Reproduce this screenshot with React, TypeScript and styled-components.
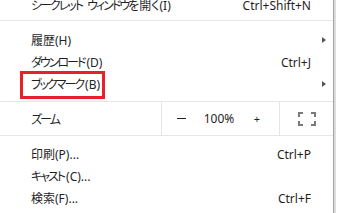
import styled, { createGlobalStyle } from "styled-components";

const GlobalStyle = createGlobalStyle`
  html, body {
    margin: 0;
    padding: 0;
    background: #fff;
    overflow: hidden;
  }
`;

const Menu = styled.div`
  width: 333px;
  height: 219px;
  margin-top: -6px;
  background: #fff;
  border-right: 1px solid #a3a3a3;
  box-shadow: 2px 0 0 #dcdcdc;
  font-family: "Noto Sans", "Noto Sans CJK JP", sans-serif;
  font-size: 12px;
  font-feature-settings: "palt";
  color: #1f1f1f;
`;

const Row = styled.div<{ $h?: number }>`
  position: relative;
  display: grid;
  grid-template-columns: 1fr auto 22px;
  align-items: center;
  height: ${(p) => p.$h ?? 22}px;
  padding-left: 31px;
`;

const Label = styled.span`
  white-space: nowrap;
`;

// kana in Yu Gothic UI are much narrower than in Noto CJK
const Kana = styled.span`
  letter-spacing: -2px;
  margin-right: 2px;
`;

const Shortcut = styled.span`
  white-space: nowrap;
  text-align: right;
`;

const Arrow = styled.span`
  width: 0;
  height: 0;
  margin-left: 11px;
  border-top: 3.5px solid transparent;
  border-bottom: 3.5px solid transparent;
  border-left: 4px solid #555;
`;

const Separator = styled.div<{ $top: number; $bottom: number }>`
  height: 1px;
  background: #e6e6e6;
  margin: ${(p) => p.$top}px 0 ${(p) => p.$bottom}px;
`;

const Highlight = styled.div`
  position: absolute;
  left: 20px;
  top: -2px;
  width: 85px;
  height: 28px;
  box-sizing: border-box;
  border: 3px solid #e8202a;
  pointer-events: none;
`;

const ZoomRow = styled.div`
  display: flex;
  height: 33px;
`;

const ZoomLabel = styled.div`
  flex: 0 0 161px;
  display: flex;
  align-items: center;
  padding-left: 31px;
  box-sizing: border-box;
`;

const ZoomControls = styled.div`
  flex: 0 0 119px;
  box-sizing: border-box;
  display: flex;
  border-left: 1px solid #e6e6e6;
  border-right: 1px solid #e6e6e6;
`;

const ZoomCell = styled.div`
  width: 38px;
  display: flex;
  align-items: center;
  justify-content: center;
`;

const FullscreenCell = styled.div`
  flex: 1;
  display: flex;
  align-items: center;
  justify-content: center;
  padding-left: 1px;
`;

const Minus = styled.span`
  width: 9px;
  height: 1px;
  background: #222;
`;

const Plus = styled.span`
  font-size: 11px;
  line-height: 1;
`;

const FullscreenIcon = () => (
  <svg width="18" height="14" viewBox="0 0 18 14" fill="none" stroke="#7a7a7a" strokeWidth="2">
    <path d="M1 5V1H5M13 1H17V5M17 9V13H13M5 13H1V9" />
  </svg>
);

const Jp = ({ text }: { text: string }) => (
  <>
    {text.split(/([\u3040-\u30ff]+)/).map((part, i) =>
      /[\u3040-\u30ff]/.test(part) ? <Kana key={i}>{part}</Kana> : part
    )}
  </>
);

export default function App() {
  return (
    <>
      <GlobalStyle />
      <Menu>
        <Row>
          <Label><Jp text="シークレット ウィンドウを開く(I)" /></Label>
          <Shortcut>Ctrl+Shift+N</Shortcut>
        </Row>
        <Separator $top={4} $bottom={8} />
        <Row>
          <Label>履歴(H)</Label>
          <Shortcut />
          <Arrow />
        </Row>
        <Row>
          <Label><Jp text="ダウンロード(D)" /></Label>
          <Shortcut>Ctrl+J</Shortcut>
        </Row>
        <Row>
          <Label><Jp text="ブックマーク(B)" /></Label>
          <Shortcut />
          <Arrow />
          <Highlight />
        </Row>
        <Separator $top={6} $bottom={0} />
        <ZoomRow>
          <ZoomLabel><Jp text="ズーム" /></ZoomLabel>
          <ZoomControls>
            <ZoomCell>
              <Minus />
            </ZoomCell>
            <ZoomCell>100%</ZoomCell>
            <ZoomCell>
              <Plus>+</Plus>
            </ZoomCell>
          </ZoomControls>
          <FullscreenCell>
            <FullscreenIcon />
          </FullscreenCell>
        </ZoomRow>
        <Separator $top={0} $bottom={7} />
        <Row>
          <Label>印刷(P)...</Label>
          <Shortcut>Ctrl+P</Shortcut>
        </Row>
        <Row>
          <Label><Jp text="キャスト(C)..." /></Label>
          <Shortcut />
        </Row>
        <Row>
          <Label>検索(F)...</Label>
          <Shortcut>Ctrl+F</Shortcut>
        </Row>
      </Menu>
    </>
  );
}
